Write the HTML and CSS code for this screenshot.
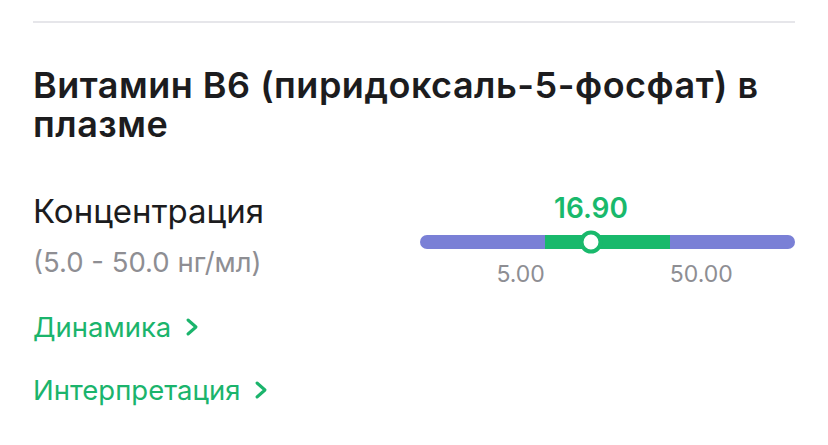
FILE: index.html
```html
<!DOCTYPE html>
<html lang="ru">
<head>
  <meta charset="UTF-8">
  <title>Витамин B6</title>
  <link rel="stylesheet" href="styles.css">
</head>
<body>
  <div class="card">
    <div class="divider"></div>
    <h2 class="title">Витамин B6 (пиридоксаль-5-фосфат) в плазме</h2>

    <div class="row">
      <div class="info">
        <div class="param">Концентрация</div>
        <div class="norm">(5.0 - 50.0 нг/мл)</div>
      </div>

      <div class="scale">
        <div class="value" style="left: 45.6%">16.90</div>
        <div class="track">
          <div class="range"></div>
          <div class="thumb" style="left: 45.6%"></div>
        </div>
        <div class="labels">
          <span class="low">5.00</span>
          <span class="high">50.00</span>
        </div>
      </div>
    </div>

    <a class="link" href="#">Динамика
      <svg width="14" height="20" viewBox="0 0 14 20"><path d="M3 3l8 7-8 7" fill="none" stroke="currentColor" stroke-width="3" stroke-linecap="round" stroke-linejoin="round"/></svg>
    </a>
    <a class="link" href="#">Интерпретация
      <svg width="14" height="20" viewBox="0 0 14 20"><path d="M3 3l8 7-8 7" fill="none" stroke="currentColor" stroke-width="3" stroke-linecap="round" stroke-linejoin="round"/></svg>
    </a>
  </div>
</body>
</html>
```

FILE: styles.css
```css
body {
  margin: 0;
  background: #ffffff;
  font-family: Inter, "Noto Sans", sans-serif;
}

.card {
  padding: 21px 33px 0 33px;
}

.divider {
  height: 2px;
  background: #e6e6ea;
}

.title {
  margin: 43px 0 0 0;
  font-size: 36px;
  line-height: 39px;
  font-weight: 600;
  color: #1c1c1e;
  letter-spacing: 0.5px;
}

.row {
  display: flex;
  margin-top: 47px;
}

.info {
  width: 387px;
}

.param {
  font-size: 33px;
  line-height: 40px;
  color: #1c1c1e;
}

.norm {
  margin-top: 14px;
  font-size: 27.5px;
  line-height: 34px;
  color: #8e8e93;
}

.scale {
  flex: 1;
  position: relative;
  padding-top: 44px;
}

.value {
  position: absolute;
  top: 0;
  transform: translateX(-50%);
  font-size: 28px;
  line-height: 34px;
  font-weight: 600;
  color: #19b96c;
}

.track {
  position: relative;
  height: 14px;
  border-radius: 7px;
  background: #7a80d6;
}

.range {
  position: absolute;
  left: 33.3%;
  width: 33.3%;
  top: 0;
  bottom: 0;
  background: #19b96c;
}

.thumb {
  position: absolute;
  top: 50%;
  width: 15px;
  height: 15px;
  border: 4.5px solid #19b96c;
  border-radius: 50%;
  background: #ffffff;
  transform: translate(-50%, -50%);
}

.labels {
  display: flex;
  margin-top: 11px;
  font-size: 23px;
  line-height: 28px;
  color: #8e8e93;
}

.low {
  width: 33.3%;
  text-align: right;
}

.high {
  margin-left: 33.3%;
}

.link {
  display: flex;
  align-items: center;
  gap: 14px;
  margin-top: 22px;
  font-size: 27.5px;
  line-height: 34px;
  color: #1bb46c;
  text-decoration: none;
}

.link + .link {
  margin-top: 29px;
}
```
